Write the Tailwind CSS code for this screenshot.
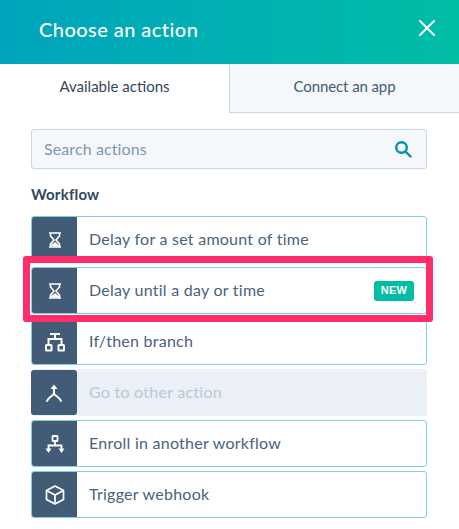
<!DOCTYPE html>
<html lang="en">
<head>
    <meta charset="UTF-8">
    <title>Choose an action</title>
    <script src="https://cdn.jsdelivr.net/npm/@tailwindcss/browser@4"></script>
</head>
<body class="bg-white overflow-hidden font-['Lato',sans-serif]">
<div class="relative w-[459px] h-[529px] overflow-hidden">
    <header class="h-16 pl-[39px] pr-[23px] flex items-center justify-between bg-gradient-to-r from-[#00a4bd] to-[#00bda5]">
        <h1 class="pb-[6px] text-white text-[20px] font-medium tracking-[0.45px]">Choose an action</h1>
        <svg class="size-[18px] mb-2" viewBox="0 0 18 18" fill="none" stroke="white" stroke-width="2" stroke-linecap="round"><path d="M2 2l14 14M16 2L2 16"/></svg>
    </header>

    <div class="flex h-[49px] text-[15px] text-[#33475b]">
        <div class="w-[229px] flex items-center justify-center pb-1">Available actions</div>
        <div class="flex-1 flex items-center justify-center pb-1 tracking-[-0.1px] text-[#425b76] bg-[#f5f8fa] border-l border-b border-[#cbd6e2]">Connect an app</div>
    </div>

    <div class="px-[31px] w-[458px]">
        <div class="mt-4 h-10 px-3 flex items-center justify-between rounded-[3px] bg-[#f5f8fa] border border-[#cbd6e2]">
            <span class="text-[16px] tracking-[0.1px] text-[#7c98b6]">Search actions</span>
            <svg class="size-[18px] mr-[2px]" viewBox="0 0 18 18" fill="none" stroke="#0091ae" stroke-width="2.4" stroke-linecap="round"><circle cx="7.5" cy="7.5" r="5.3"/><path d="M11.500 11.500l5 5"/></svg>
        </div>

        <h2 class="mt-[15px] mb-[12px] text-[15px] leading-5 font-bold tracking-[0.2px] text-[#33475b]">Workflow</h2>

        <div class="flex flex-col gap-[4px] text-[16px] tracking-[0.25px] text-[#4a6280]">
            <div class="h-[47px] flex items-center rounded-[3px] border border-[#7fd1de] overflow-hidden">
                <div class="w-[45px] h-full flex items-center justify-center bg-[#425b76]">
                    <svg class="size-[20px]" viewBox="0 0 20 20" fill="none" stroke="white" stroke-width="1.600"><path d="M4 3h12M4 17h12"/><path d="M5.500 3v3l3.500 4-3.500 4v3M14.500 3v3l-3.500 4 3.500 4v3"/><path d="M6 16.500v-1.500l4-3 4 3v1.500z" fill="white" stroke="none"/></svg>
                </div>
                <span class="pl-3 pb-px">Delay for a set amount of time</span>
            </div>
            <div class="h-[47px] flex items-center rounded-[3px] border border-[#7fd1de] overflow-hidden">
                <div class="w-[45px] h-full flex items-center justify-center bg-[#425b76]">
                    <svg class="size-[20px]" viewBox="0 0 20 20" fill="none" stroke="white" stroke-width="1.600"><path d="M4 3h12M4 17h12"/><path d="M5.500 3v3l3.500 4-3.500 4v3M14.500 3v3l-3.500 4 3.500 4v3"/><path d="M6 16.500v-1.500l4-3 4 3v1.500z" fill="white" stroke="none"/></svg>
                </div>
                <span class="pl-3 pb-px flex-1">Delay until a day or time</span>
                <span class="mr-[12px] h-5 w-10 flex items-center justify-center rounded-[3px] bg-[#00bda5] text-white text-[11px] font-bold font-['Liberation_Sans',sans-serif] tracking-[0.3px]">NEW</span>
            </div>
            <div class="h-[47px] flex items-center rounded-[3px] border border-[#7fd1de] overflow-hidden">
                <div class="w-[45px] h-full flex items-center justify-center bg-[#425b76]">
                    <svg class="size-[20px]" viewBox="0 0 20 20" fill="none" stroke="white" stroke-width="2"><path d="M5 2h10M10 2v5M3.500 13V7h13v6"/><rect x="1" y="13" width="5.500" height="5.500" rx="0.500"/><rect x="13.500" y="13" width="5.500" height="5.500" rx="0.500"/></svg>
                </div>
                <span class="pl-3 pb-px">If/then branch</span>
            </div>
            <div class="h-[47px] flex items-center rounded-[3px] bg-[#eaf0f6] overflow-hidden">
                <div class="w-[46px] h-[45px] rounded-[3px] flex items-center justify-center bg-[#425b76]">
                    <svg class="size-[20px]" viewBox="0 0 20 20" fill="none" stroke="white" stroke-width="2" stroke-linecap="round"><path d="M10 5v5c0 3-6 4-7 8M10 10c0 3 6 4 7 8"/><path d="M6.500 6L10 1.500 13.500 6z" fill="white" stroke="none"/></svg>
                </div>
                <span class="pl-3 pb-px text-[#b9c8d9]">Go to other action</span>
            </div>
            <div class="h-[47px] flex items-center rounded-[3px] border border-[#7fd1de] overflow-hidden">
                <div class="w-[45px] h-full flex items-center justify-center bg-[#425b76]">
                    <svg class="size-[20px]" viewBox="0 0 20 20" fill="none" stroke="white" stroke-width="1.800"><rect x="7.500" y="2" width="5" height="5" rx="0.500"/><path d="M10 7v4.500M3.500 15v-3.500h13V15"/><path d="M0.500 14.500h6L3.500 19zM13.500 14.500h6L16.500 19z" fill="white" stroke="none"/></svg>
                </div>
                <span class="pl-3 pb-px">Enroll in another workflow</span>
            </div>
            <div class="h-[47px] flex items-center rounded-[3px] border border-[#7fd1de] overflow-hidden">
                <div class="w-[45px] h-full flex items-center justify-center bg-[#425b76]">
                    <svg class="size-[20px]" viewBox="0 0 20 20" fill="none" stroke="white" stroke-width="1.700" stroke-linejoin="round"><path d="M10 1l8.500 4.500v9L10 19l-8.500-4.500v-9z"/><path d="M1.500 5.500L10 10l8.500-4.500M10 10v9"/></svg>
                </div>
                <span class="pl-3 pb-px">Trigger webhook</span>
            </div>
        </div>
    </div>

    <div class="absolute left-[23px] top-[256px] w-[410px] h-[66px] border-[7px] border-[#ff2e6a] rounded-[3px]"></div>
</div>
</body>
</html>
